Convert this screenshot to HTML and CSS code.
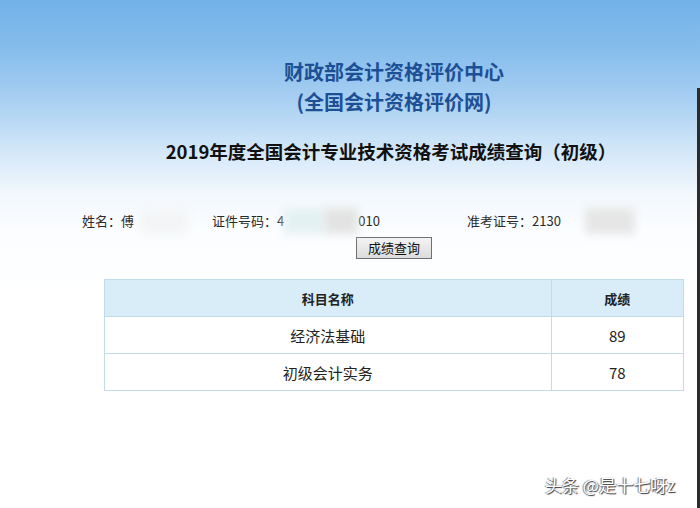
FILE: index.html
```html
<!DOCTYPE html>
<html lang="zh-CN">
<head>
<meta charset="utf-8">
<link rel="stylesheet" href="styles.css">
</head>
<body>
<div class="page">
  <div class="content">
    <div class="org">
      <div class="org-line">财政部会计资格评价中心</div>
      <div class="org-line">(全国会计资格评价网)</div>
    </div>
    <div class="subtitle">2019年度全国会计专业技术资格考试成绩查询（初级）</div>
    <div class="info">
      <span class="field f-name">姓名：傅<span class="blur b1"></span></span>
      <span class="field f-id">证件号码：4<span class="blur b2"></span><span class="blur b3"></span>010</span>
      <span class="field f-no">准考证号：2130<span class="blur b4"></span></span>
    </div>
    <div class="btn-row"><button class="btn">成绩查询</button></div>
    <table class="scores">
      <thead>
        <tr><th class="c-name">科目名称</th><th class="c-score">成绩</th></tr>
      </thead>
      <tbody>
        <tr><td>经济法基础</td><td>89</td></tr>
        <tr><td>初级会计实务</td><td>78</td></tr>
      </tbody>
    </table>
  </div>
  <div class="edge"></div>
  <div class="watermark">头条 @是十七呀z</div>
</div>
</body>
</html>
```
FILE: styles.css
```css
html, body {
  margin: 0;
  padding: 0;
}
body {
  font-family: "Noto Sans CJK SC", "Noto Sans", sans-serif;
  color: #1e1e1e;
}
.page {
  position: relative;
  width: 700px;
  height: 508px;
  overflow: hidden;
  background: linear-gradient(to bottom, #72b2e8 0px, #86bdec 50px, #a8cff2 100px, #d2e7f8 150px, #f3f8fd 195px, #fbfdff 230px, #ffffff 300px);
}
.content {
  margin-left: 104px;
  width: 580px;
  padding-top: 57px;
}
.org {
  text-align: center;
  color: #1d4f95;
  font-size: 20px;
  font-weight: bold;
  line-height: 30px;
}
.subtitle {
  margin-top: 20px;
  text-align: center;
  font-size: 18.5px;
  font-weight: bold;
  line-height: 28px;
  color: #111;
  margin-left: -6px;
}
.info {
  margin-top: 46px;
  margin-left: -22px;
  height: 20px;
  display: flex;
  align-items: center;
  font-size: 13px;
  line-height: 20px;
  color: #2a2a2a;
}
.field {
  display: inline-flex;
  align-items: center;
  height: 20px;
  white-space: nowrap;
}
.f-name { width: 130px; }
.f-id { width: 255px; }
.blur {
  display: inline-block;
  height: 26px;
  margin: -3px 0;
  filter: blur(4px);
}
.b1 { width: 48px; margin-left: 6px; background: #f3f5f6; }
.b2 { width: 40px; background: #e4f1f3; }
.b3 { width: 34px; background: #e3e3e3; }
.b4 { width: 50px; margin-left: 24px; background: #e6e6e6; }
.btn-row {
  margin-top: 6px;
  height: 22px;
  text-align: center;
}
.btn {
  width: 76px;
  height: 22px;
  padding: 0;
  font-family: inherit;
  font-size: 13px;
  line-height: 20px;
  color: #111;
  border: 1px solid #707070;
  border-radius: 0;
  background: linear-gradient(to bottom, #f4f4f4, #dcdcdc);
  vertical-align: top;
}
.scores {
  margin-top: 20px;
  width: 580px;
  border-collapse: collapse;
  border: 1px solid #c3dbe7;
  background: #fff;
}
.scores th, .scores td {
  border: 1px solid #c3dbe7;
  height: 36px;
  padding: 0;
  text-align: center;
  color: #222;
}
.scores th {
  background: #d8edf8;
  font-size: 13px;
  font-weight: bold;
}
.scores td {
  font-size: 15px;
}
.c-name { width: 448px; }
.c-score { width: 132px; }
.edge {
  position: absolute;
  left: 697px;
  top: 88px;
  width: 3px;
  bottom: 0;
  background: #2c2c2c;
}
.watermark {
  position: absolute;
  left: 545px;
  top: 474px;
  font-size: 17px;
  line-height: 22px;
  color: #fff;
  text-shadow: 1px 1px 1px #333, -1px 0 1px #777;
}
```
